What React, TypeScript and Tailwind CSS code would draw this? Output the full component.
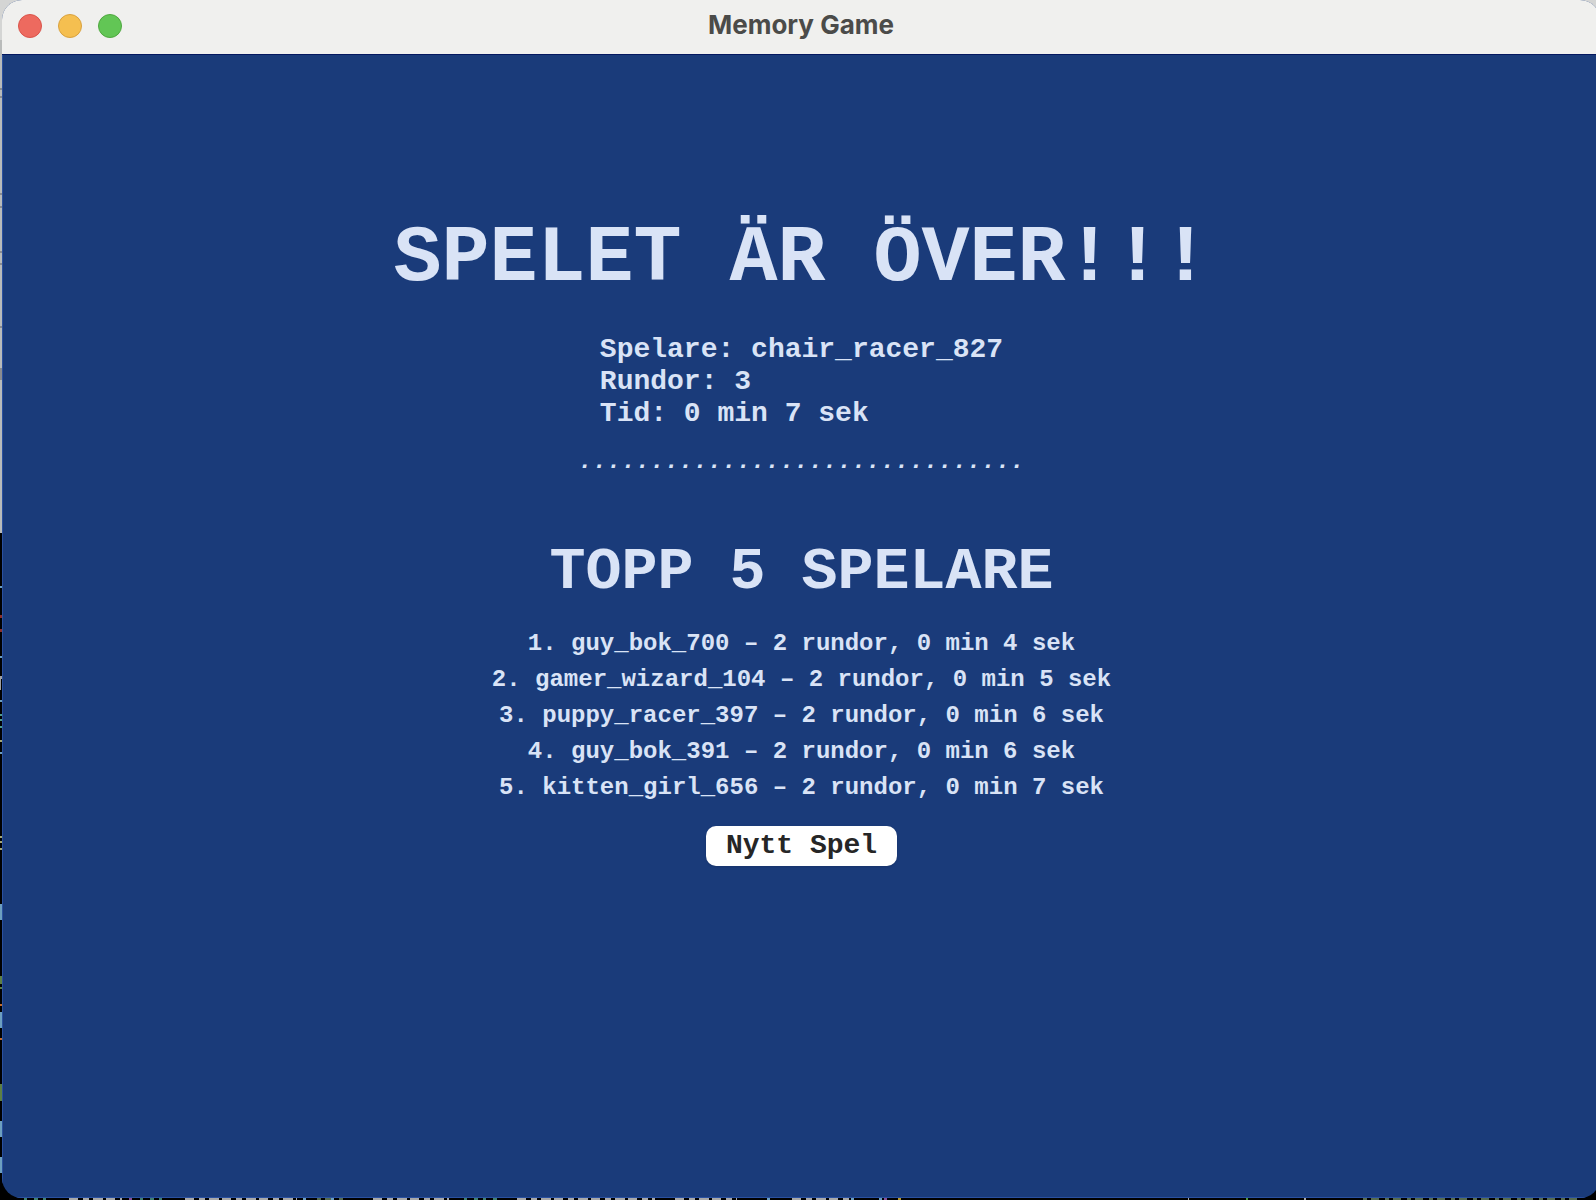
const players = [
  'guy_bok_700 – 2 rundor, 0 min 4 sek',
  'gamer_wizard_104 – 2 rundor, 0 min 5 sek',
  'puppy_racer_397 – 2 rundor, 0 min 6 sek',
  'guy_bok_391 – 2 rundor, 0 min 6 sek',
  'kitten_girl_656 – 2 rundor, 0 min 7 sek',
];

function TitleBar() {
  return (
    <header className="relative flex h-[55px] shrink-0 items-center justify-center border-b border-[#04185f] bg-[#f0f0ee] pb-1">
      <div className="absolute left-4 top-3.5 flex gap-4">
        <button type="button" aria-label="Close" className="size-6 rounded-full border border-[#d9544b] bg-[#ed6a5f]" />
        <button type="button" aria-label="Minimize" className="size-6 rounded-full border border-[#d8a13f] bg-[#f5bf50]" />
        <button type="button" aria-label="Zoom" className="size-6 rounded-full border border-[#4fa73f] bg-[#62c655]" />
      </div>
      <h1 className="font-[Inter,sans-serif] text-[26px] font-bold leading-8 text-[#4b4b49]">Memory Game</h1>
    </header>
  );
}

/* Slivers of the desktop that show beside and below the window. */
function Backdrop() {
  return (
    <div aria-hidden="true" className="absolute inset-0 bg-black">
      <div className="h-[533px] w-10 bg-[#b9bbba]" />
      <div className="absolute left-0 top-0 h-10 w-full bg-[#d4d5d4]" />
      <svg className="absolute left-0 top-0" width="2" height="1200" viewBox="0 0 2 1200">
        <path fill="#8a8c90" d="M0 88h2v2H0zM0 96h2v2H0zM0 193h2v2H0zM0 206h2v2H0zM0 251h2v2H0zM0 263h2v2H0zM0 326h2v2H0zM0 368h2v12H0z" />
        <path
          fill="#6c9fc0"
          d="M0 586h2v2H0zM0 656h2v2H0zM0 700h2v2H0zM0 752h2v2H0zM0 904h2v16H0zM0 1012h2v16H0zM0 1121h2v16H0zM0 1157h2v16H0z"
        />
        <path fill="#8c2f2b" d="M0 615h2v3H0zM0 629h2v3H0z" />
        <path fill="#a0a0a0" d="M0 676h2v3H0zM0 679h1v11H0z" />
        <path fill="#4f9d8b" d="M0 714h2v2H0zM0 719h2v2H0zM0 726h2v2H0z" />
        <path fill="#a5a774" d="M0 740h2v2H0zM0 836h2v2H0zM0 841h2v2H0zM0 848h2v2H0z" />
        <path fill="#5d7f43" d="M0 976h2v8H0zM0 987h2v2H0zM0 1084h2v17H0z" />
        <path fill="#c46b2d" d="M0 1004h2v2H0zM0 1038h2v2H0z" />
      </svg>
      <svg className="absolute bottom-0 left-0" width="1596" height="2" viewBox="0 0 1596 2">
        <g fill="none" strokeWidth="2">
          <path stroke="#a9a9a9" strokeDasharray="9 5 6 4 10 3" d="M69 1h53M185 1h112M373 1h76M517 1h138M675 1h62M792 1h58" />
          <path stroke="#3f7f70" strokeDasharray="3 7 4 5" d="M24 1h26M140 1h26M464 1h36" />
          <path stroke="#566b50" strokeDasharray="4 4 8 6" d="M317 1h26M1363 1h214" />
          <path stroke="#6c9fc0" strokeDasharray="3 25" d="M303 1h50M767 1h3M851 1h34" />
          <path stroke="#8a4f96" d="M129 1h3M884 1h3" />
          <path stroke="#b99b2f" d="M898 1h3" />
          <path stroke="#4f9a3f" d="M1246 1h2" />
          <path stroke="#a9a9a9" d="M1188 1h1M1304 1h2" />
        </g>
      </svg>
    </div>
  );
}

export default function App() {
  return (
    <div className="relative flex min-h-screen flex-col overflow-hidden pb-0.5 pl-0.5">
      <Backdrop />
      <div className="relative -mr-1 flex grow flex-col overflow-hidden rounded-[20px] bg-[#1a3b7a]">
        <TitleBar />
        <main className="flex grow flex-col items-center border-b border-l border-[#2a50a0] pt-[164px] font-['Liberation_Mono',monospace] font-bold text-[#d9e3f6]">
          <h2 className="whitespace-pre text-[80px] leading-[80px]">SPELET ÄR ÖVER!!!</h2>
          <div className="mt-[35px] text-[28px] leading-8">
            <p>Spelare: chair_racer_827</p>
            <p>Rundor: 3</p>
            <p>Tid: 0 min 7 sek</p>
          </div>
          <p className="mt-4 text-2xl italic leading-8">...............................</p>
          <h3 className="mt-16 text-[60px] leading-[60px]">TOPP 5 SPELARE</h3>
          <ol className="mt-6 text-center text-2xl leading-9">
            {players.map((player, i) => (
              <li key={player}>{`${i + 1}. ${player}`}</li>
            ))}
          </ol>
          <button type="button" className="mt-5 h-10 rounded-[10px] bg-white px-5 text-[28px] leading-10 text-[#262626] shadow-sm">
            Nytt Spel
          </button>
        </main>
      </div>
    </div>
  );
}
